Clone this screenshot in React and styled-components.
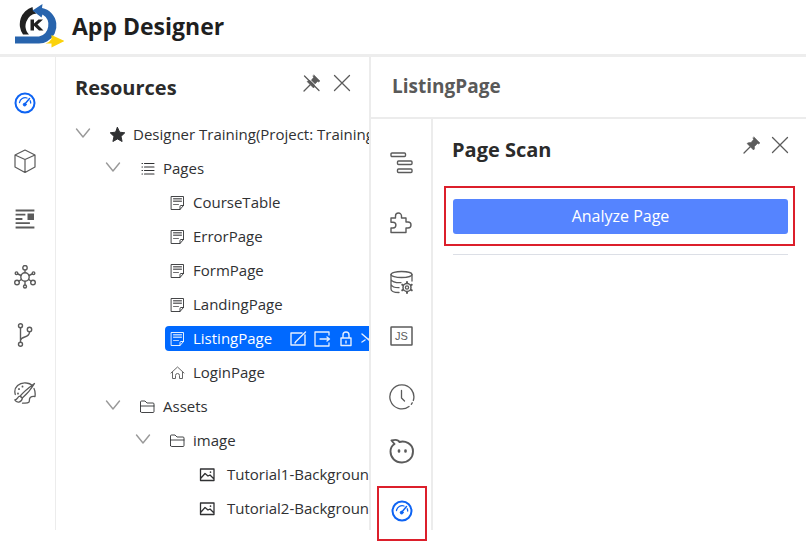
import React from "react";
import styled, { createGlobalStyle } from "styled-components";

const GlobalStyle = createGlobalStyle`
  * { box-sizing: border-box; }
  body {
    margin: 0;
    background: #fff;
    color: #303133;
    font-family: "Open Sans", "Noto Sans", sans-serif;
    font-size: 15px;
  }
`;

const Shell = styled.div`
  display: flex;
  flex-direction: column;
  min-height: 100vh;
  padding-bottom: 12px;
`;

const Header = styled.header`
  display: flex;
  align-items: center;
  gap: 8px;
  height: 57px;
  padding: 0 14px 2px;
  border-bottom: 3px solid #ededed;
`;

const AppTitle = styled.h1`
  margin: 0;
  color: #1f1f1f;
  font-size: 23px;
  line-height: 32px;
  font-weight: 700;
`;

const Body = styled.div`
  display: flex;
  flex: 1;
  min-width: 0;
`;

const MainRail = styled.nav`
  display: flex;
  flex-direction: column;
  align-items: center;
  gap: 34px;
  flex: none;
  width: 56px;
  padding: 34px 6px 0 0;
  border-right: 1px solid #ececec;
`;

const IconButton = styled.button`
  position: relative;
  display: flex;
  align-items: center;
  justify-content: center;
  flex: none;
  width: ${(p) => p.$size || 24}px;
  height: ${(p) => p.$size || 24}px;
  padding: 0;
  border: 0;
  background: none;
  color: ${(p) => (p.$active ? "#0d63f3" : "#5b5b5b")};
  cursor: pointer;
`;

const ResourcePanel = styled.aside`
  flex: none;
  width: 315px;
  overflow: hidden;
  border-right: 2px solid #ececec;
`;

const PanelHead = styled.div`
  display: flex;
  align-items: flex-start;
  justify-content: space-between;
  padding: ${(p) => (p.$inset ? "16px 17px 0 19px" : "16px 18px 0 19px")};
`;

const PanelTitle = styled.h2`
  margin: 0;
  color: ${(p) => (p.$muted ? "#595959" : "#2b2b2b")};
  font-size: ${(p) => (p.$muted ? 19 : 20)}px;
  line-height: 30px;
  font-weight: 700;
`;

const PanelActions = styled.div`
  display: flex;
  gap: ${(p) => p.$gap}px;
  padding-top: 1px;
`;

const Tree = styled.ul`
  margin: 0;
  padding: 14px 0 0;
  list-style: none;
`;

const TreeRow = styled.li`
  display: flex;
  align-items: center;
  height: 34px;
  padding-left: ${(p) => 19 + p.$level * 30}px;
  white-space: nowrap;
`;

const Toggle = styled.button`
  display: flex;
  flex: none;
  width: 16px;
  height: 16px;
  margin-right: 14px;
  padding: 0;
  border: 0;
  background: none;
  color: #999;
  cursor: pointer;
`;

const ToggleSpace = styled.span`
  flex: none;
  width: 30px;
`;

const RowBody = styled.div`
  display: flex;
  align-items: center;
  flex: 1 0 auto;
  height: 25px;
  padding-left: 4px;
  border-radius: 4px 0 0 4px;
  background: ${(p) => (p.$selected ? "#0069ff" : "transparent")};
  color: ${(p) => (p.$selected ? "#fff" : "#303133")};
`;

const RowLabel = styled.button`
  display: flex;
  align-items: center;
  gap: ${(p) => (p.$wide ? 12 : 8)}px;
  padding: 0;
  border: 0;
  background: none;
  color: inherit;
  font: inherit;
  line-height: 25px;
  cursor: pointer;
`;

const RowActions = styled.div`
  display: flex;
  gap: 6px;
  margin-left: 17px;

  button {
    width: 18px;
    height: 18px;
    color: #e3eeff;
  }
`;

const Workspace = styled.main`
  display: flex;
  flex-direction: column;
  flex: 1;
  min-width: 0;
`;

const WorkspaceHead = styled.div`
  height: 62px;
  padding: 14px 21px;
  border-bottom: 2px solid #ececec;
`;

const WorkspaceBody = styled.div`
  display: flex;
  flex: 1;
`;

const ToolRail = styled.nav`
  display: grid;
  grid-template-rows: 60px 60px 54px 60px 54px 60px;
  justify-items: center;
  align-content: start;
  flex: none;
  width: 62px;
  padding: 31px 0 0 2px;
  border-right: 2px solid #ececec;
`;

const ToolCallout = styled.span`
  position: absolute;
  inset: -12px -12px -17px;
  border: 2px solid #dc1f2b;
`;

const ScanPanel = styled.section`
  flex: 1;
  min-width: 0;
`;

const ButtonCallout = styled.div`
  margin: 21px 11px 8px;
  padding: 11px 5px 10px 7px;
  border: 2px solid #dc1f2b;
`;

const AnalyzeButton = styled.button`
  display: block;
  width: 100%;
  height: 35px;
  padding: 0 0 2px;
  border: 0;
  border-radius: 3px;
  background: #5584ff;
  color: #fff;
  font: inherit;
  font-size: 16px;
  cursor: pointer;
`;

const Divider = styled.hr`
  margin: 0 18px 0 20px;
  border: 0;
  border-top: 1px solid #dcdfe6;
`;

const Svg = ({ size = 24, box = 24, sw = 1.4, children }) => (
  <svg
    width={size}
    height={size}
    viewBox={`0 0 ${box} ${box}`}
    fill="none"
    stroke="currentColor"
    strokeWidth={sw}
    strokeLinecap="round"
    strokeLinejoin="round"
    aria-hidden="true"
  >
    {children}
  </svg>
);

const Logo = () => (
  <svg width="50" height="44" viewBox="0 0 50 44" aria-hidden="true">
    <path d="M9 30.500A18 18 0 0 1 18.500 3L19 6.500L22.500 9.500A12.500 12.500 0 0 0 15 30.500Z" fill="#202020" />
    <path d="M1 32.500H25A12 12 0 0 0 28.500 10.500L27.500 13.500L18.500 6.500L28.500 0L28 4A18 18 0 0 1 33 37.500Q30 39.500 25 39.500H1Z" fill="#2864ad" />
    <path d="M37.500 31L50.500 37L37.500 43.500V39.500H31.500Q35.500 38.500 37.500 35Z" fill="#fbd20b" />
    <path d="M16.500 15.500H20V19.500L24.500 15.500H29L23.500 20.500L29.500 26.500H25L20 21.700V26.500H16.500Z" fill="#202020" />
  </svg>
);

const Gauge = () => (
  <Svg sw={2}>
    <circle cx="12" cy="12" r="9.500" />
    <path d="M6.500 11.500A5.800 5.800 0 0 1 14 7M17.200 9.800A5.800 5.800 0 0 1 17.700 12" strokeWidth="1.300" />
    <path d="M11.500 13.500L16.500 7.500" strokeWidth="1.500" />
    <circle cx="11.700" cy="13.600" r="1.500" fill="currentColor" strokeWidth="0.800" />
  </Svg>
);
const Cube = () => (
  <Svg sw={1.2}>
    <path d="M12 1L22 6V18L12 23.500L2 18V6ZM2 6L12 10.500L22 6M12 10.500V23.500" />
  </Svg>
);
const Layout = () => (
  <Svg sw={1.8}>
    <path d="M3.500 3.500H20.500M3.500 7.700H11.500M3.500 12H8.500M3.500 16.200H16M3.500 20.500H20.500" strokeLinecap="square" />
    <path d="M14.500 6.500H21V13H14.500Z" fill="currentColor" stroke="none" />
  </Svg>
);
const Network = () => (
  <Svg sw={1.4}>
    <circle cx="12" cy="12" r="4.200" />
    <circle cx="12" cy="2.700" r="2.200" />
    <circle cx="4" cy="17.500" r="2.300" />
    <circle cx="20" cy="17.500" r="2.300" />
    <circle cx="3.500" cy="8.200" r="1.300" />
    <circle cx="20.500" cy="8.200" r="1.300" />
    <circle cx="12" cy="21.500" r="1.500" />
    <path d="M12 5V7.500M6 16L8.500 14.300M18 16L15.500 14.300M5 9L8 10.500M19 9L16 10.500M12 16.500V20" />
  </Svg>
);
const Branch = () => (
  <Svg>
    <circle cx="7.500" cy="2.700" r="2" />
    <circle cx="7.500" cy="21.300" r="2" />
    <circle cx="16.500" cy="6.500" r="2.200" />
    <path d="M7.500 5V19M16.500 9C16.500 15.500 8 12.500 7.500 17.500" />
  </Svg>
);
const Paint = () => (
  <Svg sw={1.3}>
    <path d="M2.300 13.500C0 6 7 1 13.500 2C16 2.200 18 3.200 19 4.200M21 7.500C22.500 10.500 22.200 14 22 15.500C20 15 17 15.500 16.500 18C16.300 20.500 17 22 12 22.200H9.500" />
    <path d="M21.500 2.500C16 6.500 10.500 11 7.200 15L9.300 17C13.500 13.500 18.500 7.500 21.500 2.500ZM7 15.200C4.500 15 5 18.500 1.800 19C3.500 22 8.500 22 9.400 17.200Z" />
    <path d="M5 12.500V12.700M6 8V8.200M9.500 5.500V5.700" strokeWidth="1.800" />
  </Svg>
);
const Outline = () => (
  <Svg size={26} box={26}>
    <rect x="2" y="3" width="14.500" height="3.500" rx="1" />
    <rect x="8.500" y="11" width="14.500" height="3.500" rx="1" />
    <rect x="8.500" y="19" width="14.500" height="3.500" rx="1" />
  </Svg>
);
const Puzzle = () => (
  <Svg size={26} box={26}>
    <path d="M2 8H6.500V6A3 3 0 0 1 12.500 6V8H17V12H19A3 3 0 0 1 19 18H17V22.500H2V18H4A2.900 2.900 0 0 0 4 12.200H2Z" />
  </Svg>
);
const Database = () => (
  <Svg size={26} box={26} sw={1.3}>
    <ellipse cx="12.500" cy="4.500" rx="10.500" ry="3" />
    <path d="M2 4.500V19C2 21.500 6 22.500 10 22.500M23 4.500V11M2 9.500C3 12 7 12.800 12 12.700M2 14.500C3 16.500 6 17.800 10 17.700" />
    <circle cx="18" cy="17.500" r="1.600" />
    <circle cx="18" cy="17.500" r="4" strokeWidth="1.500" />
    <path d="M18 12V13M18 22V23M13.200 14.700L14 15.200M22 19.800L22.800 20.300M13.200 20.300L14 19.800M22 15.200L22.800 14.700" strokeWidth="2" />
  </Svg>
);
const JsBox = () => (
  <Svg size={26} box={26} sw={1.5}>
    <rect x="2" y="3" width="21" height="18" rx="0.500" />
    <text x="12.500" y="16" textAnchor="middle" fill="currentColor" stroke="none" fontFamily="Liberation Sans, sans-serif" fontSize="11">JS</text>
  </Svg>
);
const Clock = () => (
  <Svg size={26} box={26} sw={1.3}>
    <path d="M20 22.500A12 12 0 1 1 24.300 16.500M23.200 18.800L22.300 20.300" />
    <path d="M12.500 6.500V14L15.500 17" />
  </Svg>
);
const Bot = () => (
  <Svg size={26} box={26} sw={1.9}>
    <path d="M10.500 4C16 2.500 24 5.500 24 13.500C24 20 19 24.500 13 24.500C6 24.500 1.500 19.500 1.500 13.500C1.500 10 3 7.500 5.500 6L2.500 2.500C6 1.500 9.500 2 10.500 4Z" />
    <path d="M10 12.500V13.500M16.500 12.500V13.500" strokeWidth="2.600" />
  </Svg>
);

const Pin = ({ off }) => (
  <Svg size={18} box={18} sw={1.3}>
    <path d="M11 1L17 7L15.500 8L14.500 7.500L11.500 10.500Q12 13 10.500 14L4 7.500Q5.500 6 8 6.500L10.500 3.500L10 2.300Z" fill="currentColor" strokeWidth="0.500" />
    <path d="M7 11L1 17" />
    {off && <path d="M2.800 1.500L17 15.500" stroke="#fff" strokeWidth="1" />}
    {off && <path d="M1.500 2L16 16.500" />}
  </Svg>
);
const Close = () => (
  <Svg size={18} box={18} sw={1.3}>
    <path d="M1.500 1.500L16.500 16.500M16.500 1.500L1.500 16.500" />
  </Svg>
);

const Chevron = () => (
  <Svg size={16} box={16} sw={1.4}><path d="M1.500 3L8 11L14.500 3" /></Svg>
);
const Star = () => (
  <Svg size={16} box={16} sw={1}>
    <path d="M8.500 1.500L10.700 6.200L15.800 6.800L12 10.400L13.100 15.500L8.500 12.900L3.900 15.500L5 10.400L1.200 6.800L6.300 6.200Z" fill="currentColor" />
  </Svg>
);
const ListIcon = () => (
  <Svg size={16} box={16} sw={1.1}>
    <path d="M5.500 3.500H15M5.500 7H15M5.500 10.500H15M5.500 14H15M3 3.500H3.500M3 7H3.500M3 10.500H3.500M3 14H3.500" />
  </Svg>
);
const PageIcon = () => (
  <Svg size={16} box={16} sw={0.9}>
    <path d="M2.500 2.500H14.500V11.500L11 15.500H2.500ZM14.500 11.500H12Q11 11.500 11 12.500V15.500" />
    <path d="M4.500 4.500H12.500M4.500 6H12.500M4.500 7.500H12.500M4.500 10.500H9.500" strokeWidth="0.700" />
  </Svg>
);
const HomeIcon = () => (
  <Svg size={16} box={16} sw={1}>
    <path d="M2 9L8.500 3L15 9M3.500 8V14.500H6.500V11.500Q6.500 9.500 8.500 9.500Q10.500 9.500 10.500 11.500V14.500H13.500V8" stroke="#666" />
  </Svg>
);
const FolderIcon = () => (
  <Svg size={16} box={16} sw={0.9}>
    <path d="M1.500 13.500V4Q1.500 3 2.500 3H6L8 5H14Q15 5 15 6V13.500Q15 14.500 14 14.500H2.500Q1.500 14.500 1.500 13.500ZM1.500 8H15" />
  </Svg>
);
const ImageIcon = () => (
  <Svg size={16} box={16} sw={1.3}>
    <path d="M1.500 3H15V14.500H1.500ZM2 12L6 7.500L9 10L11 9L14.500 12.500" />
    <path d="M11.500 6V6.200" strokeWidth="1.600" />
  </Svg>
);

const EditIcon = () => (
  <Svg size={18} box={18} sw={1.4}><path d="M13 4H2V16H16V6M16.500 3L7 12.500L6 14" /></Svg>
);
const ExportIcon = () => (
  <Svg size={18} box={18} sw={1.3}><path d="M16 6V3H2V17H16V14M7 10H16.500M14 8L16.500 10L14 12" /></Svg>
);
const LockIcon = () => (
  <Svg size={18} box={18} sw={1.4}><path d="M4 9H14V16.500H4ZM6 9V6Q6 3 9 3Q12 3 12 6V9M9 12V14" /></Svg>
);
const CutIcon = () => (
  <Svg size={18} box={18} sw={1.4}><path d="M1 5L15 17M1 13L4 11M15 4L8 10" /></Svg>
);

const mainTools = [
  ["Dashboard", Gauge],
  ["Components", Cube],
  ["Layout", Layout],
  ["Services", Network],
  ["Versions", Branch],
  ["Themes", Paint],
];

const pageTools = [
  ["Outline", Outline],
  ["Plugins", Puzzle],
  ["Data", Database],
  ["Script", JsBox],
  ["History", Clock],
  ["Assistant", Bot],
  ["Page Scan", Gauge],
];

const treeItems = [
  { label: "Designer Training(Project: Training)", level: 0, Icon: Star, open: true },
  { label: "Pages", level: 1, Icon: ListIcon, open: true },
  { label: "CourseTable", level: 2, Icon: PageIcon },
  { label: "ErrorPage", level: 2, Icon: PageIcon },
  { label: "FormPage", level: 2, Icon: PageIcon },
  { label: "LandingPage", level: 2, Icon: PageIcon },
  { label: "ListingPage", level: 2, Icon: PageIcon, selected: true },
  { label: "LoginPage", level: 2, Icon: HomeIcon },
  { label: "Assets", level: 1, Icon: FolderIcon, open: true },
  { label: "image", level: 2, Icon: FolderIcon, open: true },
  { label: "Tutorial1-Background", level: 3, Icon: ImageIcon, wide: true },
  { label: "Tutorial2-Background", level: 3, Icon: ImageIcon, wide: true },
];

const rowActions = [
  ["Edit", EditIcon],
  ["Export", ExportIcon],
  ["Lock", LockIcon],
  ["Cut", CutIcon],
];

export default function App() {
  return (
    <>
      <GlobalStyle />
      <Shell>
        <Header>
          <Logo />
          <AppTitle>App Designer</AppTitle>
        </Header>
        <Body>
          <MainRail aria-label="Main">
            {mainTools.map(([name, Icon], i) => (
              <IconButton key={name} aria-label={name} $active={i === 0}><Icon /></IconButton>
            ))}
          </MainRail>
          <ResourcePanel>
            <PanelHead>
              <PanelTitle>Resources</PanelTitle>
              <PanelActions $gap={12}>
                <IconButton $size={18} aria-label="Unpin resources"><Pin off /></IconButton>
                <IconButton $size={18} aria-label="Close resources"><Close /></IconButton>
              </PanelActions>
            </PanelHead>
            <Tree>
              {treeItems.map(({ label, level, Icon, open, selected, wide }) => (
                <TreeRow key={label} $level={level}>
                  {open ? <Toggle aria-label={`Collapse ${label}`} aria-expanded="true"><Chevron /></Toggle> : <ToggleSpace />}
                  <RowBody $selected={selected}>
                    <RowLabel $wide={wide}><Icon />{label}</RowLabel>
                    {selected && (
                      <RowActions>
                        {rowActions.map(([name, ActionIcon]) => (
                          <IconButton key={name} aria-label={name}><ActionIcon /></IconButton>
                        ))}
                      </RowActions>
                    )}
                  </RowBody>
                </TreeRow>
              ))}
            </Tree>
          </ResourcePanel>
          <Workspace>
            <WorkspaceHead>
              <PanelTitle $muted>ListingPage</PanelTitle>
            </WorkspaceHead>
            <WorkspaceBody>
              <ToolRail aria-label="Page tools">
                {pageTools.map(([name, Icon]) => {
                  const active = name === "Page Scan";
                  return (
                    <IconButton key={name} $size={26} $active={active} aria-label={name}>
                      <Icon />
                      {active && <ToolCallout />}
                    </IconButton>
                  );
                })}
              </ToolRail>
              <ScanPanel>
                <PanelHead $inset>
                  <PanelTitle>Page Scan</PanelTitle>
                  <PanelActions $gap={10}>
                    <IconButton $size={18} aria-label="Pin page scan"><Pin /></IconButton>
                    <IconButton $size={18} aria-label="Close page scan"><Close /></IconButton>
                  </PanelActions>
                </PanelHead>
                <ButtonCallout>
                  <AnalyzeButton>Analyze Page</AnalyzeButton>
                </ButtonCallout>
                <Divider />
              </ScanPanel>
            </WorkspaceBody>
          </Workspace>
        </Body>
      </Shell>
    </>
  );
}
